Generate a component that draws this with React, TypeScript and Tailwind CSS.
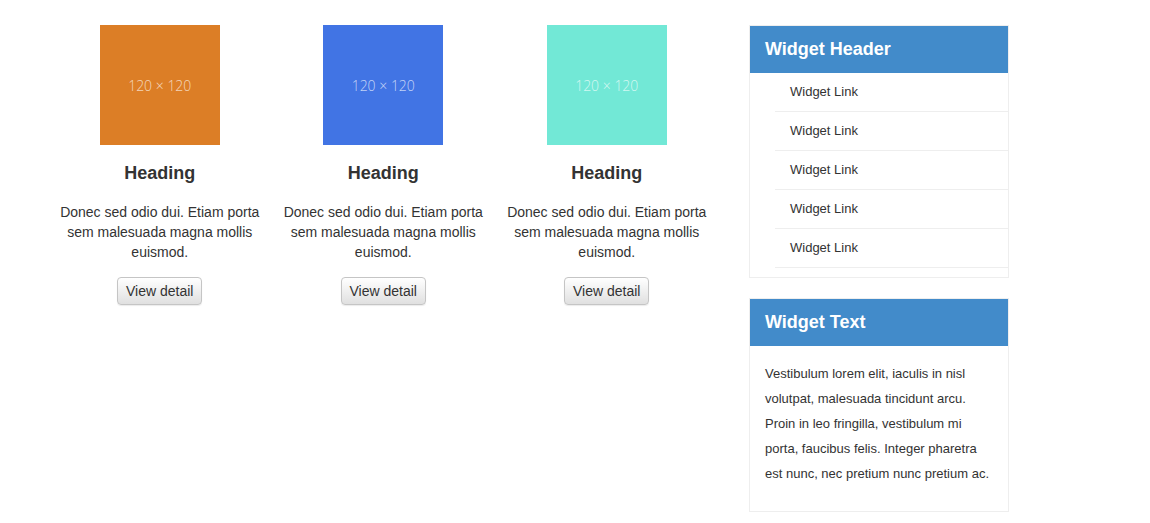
const cards = [
  { color: "bg-[#dc7e26]" },
  { color: "bg-[#4174e4]" },
  { color: "bg-[#72e8d6]" },
];

const links = ["Widget Link", "Widget Link", "Widget Link", "Widget Link", "Widget Link"];

export default function App() {
  return (
    <div className="min-h-screen bg-white text-[#333] font-['Liberation_Sans',Arial,sans-serif]">
      <div className="flex pl-[48px] pt-[25px] gap-[30px] items-start">
        <div className="flex w-[671px]">
          {cards.map((c, i) => (
            <div key={i} className="w-[223.5px] px-[10px] flex flex-col items-center text-center">
              <div
                className={`w-[120px] h-[120px] ${c.color} flex items-center justify-center text-white/70 text-[14px] font-['Open_Sans',sans-serif] font-light`}
              >
                120 × 120
              </div>
              <h2 className="mt-[17px] text-[18px] leading-[22px] font-bold">Heading</h2>
              <p className="mt-[18px] text-[14px] leading-[20px]">
                Donec sed odio dui. Etiam porta sem malesuada magna mollis euismod.
              </p>
              <button className="mt-[15px] h-[28px] px-[8px] text-[14px] leading-none text-[#333] border border-[#c5c5c5] rounded-[4px] bg-gradient-to-b from-white to-[#e0e0e0] shadow-[0_1px_1px_rgba(0,0,0,0.08)]">
                View detail
              </button>
            </div>
          ))}
        </div>

        <div className="w-[260px] flex flex-col gap-[20px]">
          <div className="border border-[#eee] pb-[9px]">
            <div className="h-[47px] bg-[#428bca] text-white text-[18px] font-bold flex items-center px-[15px]">
              Widget Header
            </div>
            <ul className="ml-[25px]">
              {links.map((l, i) => (
                <li key={i} className="h-[39px] border-b border-[#eee] flex items-center pl-[15px] text-[13px]">
                  {l}
                </li>
              ))}
            </ul>
          </div>

          <div className="border border-[#eee]">
            <div className="h-[47px] bg-[#428bca] text-white text-[18px] font-bold flex items-center px-[15px]">
              Widget Text
            </div>
            <p className="px-[15px] pt-[15px] pb-[25px] text-[13px] leading-[25px]">
              Vestibulum lorem elit, iaculis in nisl volutpat, malesuada tincidunt arcu. Proin in leo fringilla,
              vestibulum mi porta, faucibus felis. Integer pharetra est nunc, nec pretium nunc pretium ac.
            </p>
          </div>
        </div>
      </div>
    </div>
  );
}
